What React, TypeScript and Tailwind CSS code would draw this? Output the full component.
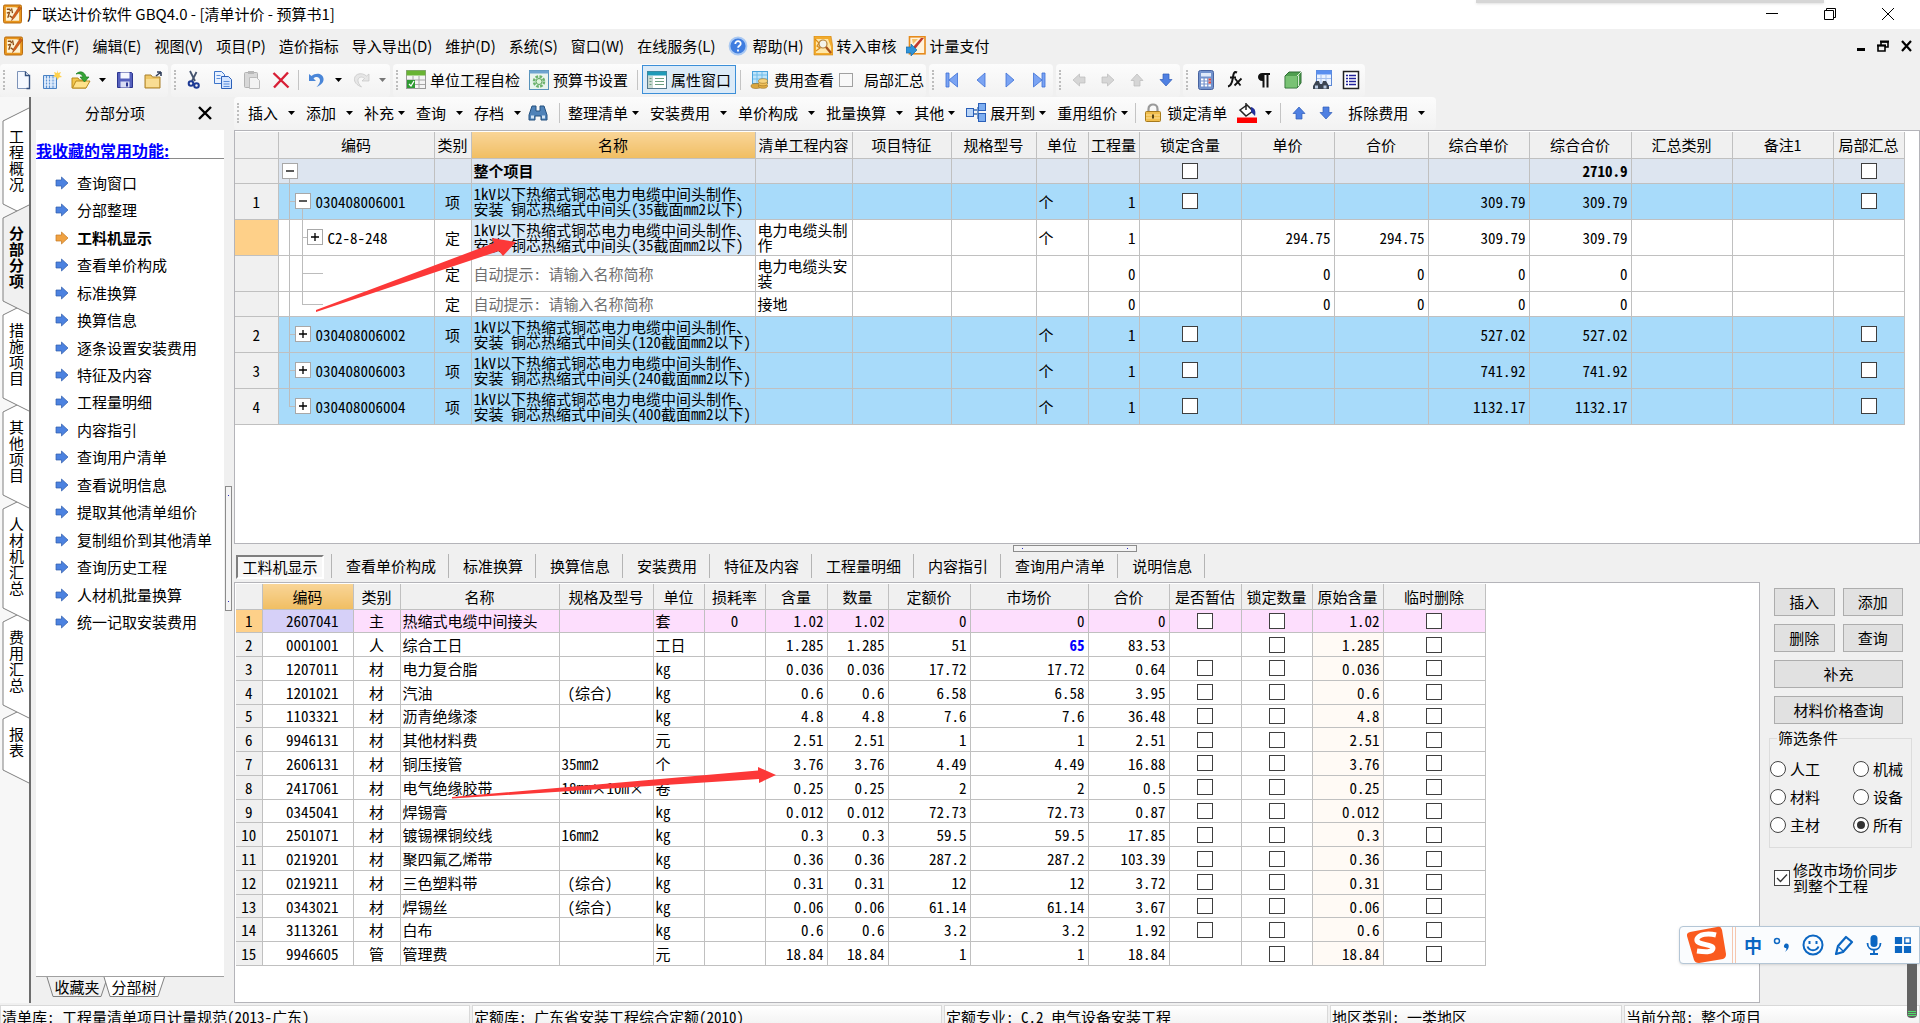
import React from 'react';
import clsx from 'clsx';

type IconProps = { children: React.ReactNode; box?: string; className?: string };

const Icon = ({ children, box = '0 0 20 20', className = 'w-5 h-5' }: IconProps) => (
  <svg viewBox={box} className={clsx('shrink-0', className)} fill="none" aria-hidden="true">
    {children}
  </svg>
);

const AppLogo = () => (
  <Icon className="w-[19px] h-5">
    <rect x="0.5" y="0.5" width="19" height="19" rx="1.5" fill="#e8951c" stroke="#b5680d" />
    <path d="M3 3h10l4 1v13H3z" fill="#fff3d2" />
    <path d="M4 5h3l1 2M4 9l3-1M5 14l2-6M9 4l1 5M7 12l3 2" stroke="#8a4a12" strokeWidth="1.4" />
    <path d="M17 2 10 13l-1 4 3-3 7-10z" fill="#d8601a" stroke="#8a3a0c" strokeWidth=".5" />
  </Icon>
);

const NewIcon = () => (
  <Icon>
    <path d="M4.500 1.500h8l4 4v13h-12z" fill="#f4f8ff" stroke="#7d93b8" />
    <path d="M12.500 1.500v4h4v13h-3" stroke="#35517f" strokeWidth="1.4" />
  </Icon>
);

const NewTableIcon = () => (
  <Icon>
    <path d="M1.500 5.500h13v13h-13z" fill="#cfe1f7" stroke="#4a82c4" />
    <path d="M4.500 6v12M7.500 6v12M11 6v12" stroke="#5b92d2" />
    <path d="M2 9h12M2 12h12M2 15h12" stroke="#eaf3ff" />
    <path d="m15 0 1 3 3-1-1.500 3L20 7l-3 .5L15.500 10 14 7l-3-.5 2-2L12 2l3 1z" fill="#ffd24d" />
  </Icon>
);

const OpenIcon = () => (
  <Icon>
    <path d="M1 8h6l1.500 2H15v8H1z" fill="#f3c64c" stroke="#b98a1d" />
    <path d="M1.500 18 5 11h14l-4 7z" fill="#ffe28a" stroke="#b98a1d" />
    <path d="M5 4c4-4 9-2 10 3h3l-4.500 5L9 7h3c-1-3-4-4-7-3z" fill="#35a535" stroke="#1c7a24" strokeWidth=".7" />
  </Icon>
);

const SaveIcon = () => (
  <Icon>
    <path d="M2.500 2.500h14l1 1v14h-15z" fill="#5560bd" stroke="#2c3690" />
    <rect x="5.500" y="2.500" width="9" height="6" fill="#f7f8ff" />
    <rect x="5.500" y="11.500" width="9" height="6" fill="#d9dcf3" />
    <rect x="11" y="12.500" width="2" height="4" fill="#2c3690" />
  </Icon>
);

const FolderUpIcon = () => (
  <Icon>
    <path d="M1 5h6l1.500 2H16v11H1z" fill="#efc766" stroke="#a9802c" />
    <path d="M2 9h13v8H2z" fill="#f9dd93" />
    <path d="m12 6 5-4m0 0h-4m4 0v4" stroke="#33405c" strokeWidth="1.6" />
  </Icon>
);

const CutIcon = () => (
  <Icon>
    <path d="m6 1 5 10M12.500 2 8 11" stroke="#44536e" strokeWidth="1.8" />
    <circle cx="7" cy="13.500" r="2.300" stroke="#1d3a94" strokeWidth="2" />
    <circle cx="12.500" cy="15.500" r="2.300" stroke="#1d3a94" strokeWidth="2" />
  </Icon>
);

const CopyIcon = () => (
  <Icon>
    <path d="M1.500 1.500h7l3 3v9h-10z" fill="#e8f1ff" stroke="#3d74c9" />
    <path d="M8.500 6.500h7l3 3v9h-10z" fill="#d3e4ff" stroke="#2a5fb8" />
    <path d="M3.500 5.500h4M3.500 8.500h4M10.500 11.500h6M10.500 14h6M10.500 16.500h6" stroke="#5b8ddb" />
  </Icon>
);

const PasteIcon = () => (
  <Icon>
    <rect x="2.500" y="2.500" width="13" height="15" rx="1" fill="#d8d8d8" stroke="#b3b3b3" />
    <rect x="6" y="1" width="6" height="3" fill="#b8b8b8" />
    <path d="M7.500 7.500h7l3 3v8h-10z" fill="#f3f3f3" stroke="#bcbcbc" />
  </Icon>
);

const DeleteIcon = () => (
  <Icon>
    <path d="m2.500 3 15 14.500M17 2.500 3 17.500" stroke="#d81f36" strokeWidth="2.400" />
  </Icon>
);

const UndoIcon = () => (
  <Icon>
    <path d="M2 4v7h7L6.500 8.500C9 6 13 7 13 10.500c0 2-1 4-3.500 6.500 5-2 7.500-5 7-8.500C16 3.500 9 2 4.500 6z" fill="#4a86d8" />
  </Icon>
);

const RedoIcon = () => (
  <Icon>
    <path d="M18 4v7h-7l2.500-2.500C11 6 7 7 7 10.500c0 2 1 4 3.500 6.500-5-2-7.500-5-7-8.500C4 3.500 11 2 15.500 6z" fill="#e6e6e6" stroke="#c4c4c4" strokeWidth=".7" />
  </Icon>
);

const CheckTableIcon = () => (
  <Icon>
    <rect x="0.500" y="0.500" width="19" height="18" fill="#f5f5f5" stroke="#9a9a9a" />
    <rect x="0.500" y="0.500" width="19" height="5" fill="#69b434" />
    <path d="M7 6v13M13 6v13M1 10h18M1 14.500h18" stroke="#a8a8a8" />
    <rect x="1" y="10" width="8" height="8" fill="#2f9b33" />
    <path d="m3 14 2 2 3-5" stroke="#fff" strokeWidth="1.300" />
  </Icon>
);

const SettingsBookIcon = () => (
  <Icon>
    <rect x="0.500" y="0.500" width="19" height="19" fill="#e9f4ee" stroke="#5792ba" />
    <rect x="0.500" y="0.500" width="19" height="3" fill="#6ea4d0" />
    <circle cx="10" cy="11.500" r="5" stroke="#6cb36c" strokeWidth="2.600" strokeDasharray="2.600 1.300" />
    <circle cx="10" cy="11.500" r="3" fill="#dff2da" stroke="#56a356" />
  </Icon>
);

const PropertyIcon = () => (
  <Icon>
    <rect x="0.500" y="1.500" width="19" height="17" fill="#fff" stroke="#54798c" />
    <rect x="0.500" y="1.500" width="19" height="4" fill="#1f9bb8" />
    <rect x="1" y="6" width="5" height="12" fill="#c9d8d2" />
    <path d="M2.500 8.500h2M2.500 11.500h2M2.500 14.500h2M8 8.500h9M8 11.500h9M8 14.500h9" stroke="#6c9e80" />
  </Icon>
);

const FeeIcon = () => (
  <Icon>
    <rect x="2.500" y="1.500" width="15" height="12" fill="#bfe4fa" stroke="#4ba3dc" />
    <path d="M3 5h14M3 9h14M7 2v11M12 2v11" stroke="#6fbdea" />
    <ellipse cx="6" cy="16" rx="5" ry="2.500" fill="#d9a63f" stroke="#9c7120" strokeWidth=".6" />
    <ellipse cx="13" cy="16" rx="4.500" ry="2.300" fill="#e0ad45" stroke="#9c7120" strokeWidth=".6" />
    <ellipse cx="13" cy="13.500" rx="4.500" ry="2.300" fill="#f1c25c" stroke="#9c7120" strokeWidth=".6" />
    <ellipse cx="13" cy="11" rx="4.500" ry="2.300" fill="#f7d47f" stroke="#9c7120" strokeWidth=".6" />
  </Icon>
);

const NavFirst = () => (
  <Icon>
    <path d="M4 3h3v14H4zM15.500 3v14L7 10z" fill="#7ba4f3" stroke="#3d70d6" strokeWidth=".8" />
  </Icon>
);
const NavPrev = () => (
  <Icon>
    <path d="M14 3v14l-8-7z" fill="#7ba4f3" stroke="#3d70d6" strokeWidth=".8" />
  </Icon>
);
const NavNext = () => (
  <Icon>
    <path d="M6 3v14l8-7z" fill="#7ba4f3" stroke="#3d70d6" strokeWidth=".8" />
  </Icon>
);
const NavLast = () => (
  <Icon>
    <path d="M16 3h-3v14h3zM4.500 3v14l8.500-7z" fill="#7ba4f3" stroke="#3d70d6" strokeWidth=".8" />
  </Icon>
);

const turns = { up: '', right: 'rotate-90', down: 'rotate-180', left: '-rotate-90' };

const BlockArrow = ({ dir, muted }: { dir: keyof typeof turns; muted?: boolean }) => (
  <Icon className={clsx('w-5 h-5', turns[dir])}>
    <path
      d="m10 4 6 6.500h-3V16H7v-5.500H4z"
      fill={muted ? '#d6d6d6' : '#4f80e2'}
      stroke={muted ? '#bababa' : '#2f5cb8'}
      strokeWidth=".7"
    />
  </Icon>
);

const CalculatorIcon = () => (
  <Icon>
    <rect x="2.500" y="0.500" width="15" height="19" rx="2" fill="#7292cd" stroke="#4763a0" />
    <rect x="5" y="3" width="10" height="3.500" fill="#dfeafa" />
    <path d="M5 9.500h10M5 12.500h10M5 15.500h10" stroke="#fff" strokeWidth="2" strokeDasharray="2.500 1.200" />
    <path d="M12.500 9.500H15M12.500 12.500H15" stroke="#e04a3d" strokeWidth="2" />
  </Icon>
);

const FunctionIcon = () => (
  <Icon>
    <path d="M12 2.500C9 1 8.500 4 8 7s-1 9-5 9.500M5 7.500h6" stroke="#111" strokeWidth="2" />
    <path d="m10 8.500 5.500 7M16.500 8.500 9.500 15.500" stroke="#111" strokeWidth="1.800" />
  </Icon>
);

const ParagraphIcon = () => (
  <Icon>
    <path d="M16 3H8.500C5.500 3 4 5 4 7s1.500 4 4.500 4v6.500h2V5h2v12.500h2V5H16z" fill="#111" />
  </Icon>
);

const BookIcon = () => (
  <Icon>
    <path d="M2 6 6 2h12v11l-4 5H2z" fill="#4f9f4f" stroke="#2f6d34" />
    <path d="M2.500 6H14v11.500H2.500z" fill="#79c274" />
    <path d="m14 6 4-4M15.500 5.500v10.500" stroke="#d8ecd4" />
  </Icon>
);

const SearchTableIcon = () => (
  <Icon>
    <rect x="4.500" y="0.500" width="15" height="15" fill="#eaf2ff" stroke="#5c88d6" />
    <rect x="4.500" y="0.500" width="15" height="4" fill="#5a8ff0" />
    <path d="M9 5v9M14 5v9M5 8.500h14" stroke="#a5c0ee" />
    <path d="M4 11h3l1 3h2l1-3h3l3 5v3H1v-3z" fill="#3b4452" />
    <rect x="3" y="15.500" width="3" height="3" fill="#bccbe3" />
    <rect x="11.500" y="15.500" width="3" height="3" fill="#bccbe3" />
  </Icon>
);

const ListIcon = () => (
  <Icon>
    <rect x="2.500" y="1.500" width="15" height="17" fill="#fff" stroke="#222" strokeWidth="1.500" />
    <path d="M5 5.500h2M5 8.500h2M5 11.500h2M5 14.500h2M8 5.500h7M8 8.500h7M8 11.500h7M8 14.500h7" stroke="#22229a" strokeWidth="1.500" />
  </Icon>
);

const BinocularsIcon = () => (
  <Icon>
    <path d="M4 3h4v5h4V3h4l3 9v5h-6v-4H7v4H1v-5z" fill="#4f82b8" stroke="#24517f" />
    <path d="M3 12.500h3v3H3zM14 12.500h3v3h-3z" fill="#d3e5f6" />
  </Icon>
);

const ExpandIcon = () => (
  <Icon>
    <path d="M6 7h5M6 11h5M12 4v12" stroke="#3b6fb5" strokeWidth="1.400" />
    <rect x="0.500" y="5.500" width="7" height="8" fill="#b8d4f7" stroke="#2a5fb8" />
    <rect x="12.500" y="0.500" width="7" height="7" fill="#7eaef0" stroke="#2a5fb8" />
    <rect x="12.500" y="10.500" width="7" height="8" fill="#7eaef0" stroke="#2a5fb8" />
  </Icon>
);

const LockIcon = () => (
  <Icon>
    <path d="M5.500 9V6c0-6 9-6 9 0v3" stroke="#9a9a9a" strokeWidth="2.200" />
    <rect x="2.500" y="8.500" width="15" height="10" rx="1" fill="#f0bd4b" stroke="#a77a1c" />
    <path d="M3 12h14M3 15h14" stroke="#ffe19a" />
    <rect x="9" y="11.500" width="2" height="4" fill="#5a4312" />
  </Icon>
);

const BucketIcon = () => (
  <Icon>
    <path d="m3 7 7-5 6 6-7 5z" fill="#fff" stroke="#222" strokeWidth="1.500" />
    <path d="M9 0v7" stroke="#222" strokeWidth="1.500" />
    <path d="M14 4c4 1 5 4 4 9l-4-4z" fill="#23319a" />
    <rect x="0" y="14.500" width="20" height="5.500" fill="#fe0000" />
  </Icon>
);

const HelpIcon = () => (
  <Icon>
    <circle cx="10" cy="10" r="8.500" fill="#3f7de0" stroke="#a9c8f2" strokeWidth="1.800" />
    <path d="M7.300 8c0-4 5.700-3.500 5.400 0-.2 1.800-2.600 1.800-2.600 3.800M10 13.500v2" stroke="#fff" strokeWidth="1.800" />
  </Icon>
);

const AuditIcon = () => (
  <Icon>
    <path d="M1 0h17l2 12v7H1z" fill="#f3ab2c" stroke="#cf8312" strokeWidth=".6" />
    <path d="M3 3h12l3 8v6H3z" fill="#ffe7a8" />
    <path d="m2 3 4 4-2 3 3 2-4 3" stroke="#d98a1a" strokeWidth="1.200" />
    <circle cx="10" cy="8" r="4" fill="#f3f3ec" stroke="#b5813a" strokeWidth="1.200" />
    <path d="m13 11 5 6" stroke="#a8521e" strokeWidth="2.400" />
  </Icon>
);

const PayIcon = () => (
  <Icon>
    <rect x="3.500" y="0.800" width="15.500" height="17" fill="#fff3dc" stroke="#e68a1b" strokeWidth="1.600" />
    <path d="M6 3h6l-5 5z" fill="#f6c26a" />
    <path d="M18 2 10 12l-3 1 1-3 7-8z" fill="#c2392b" />
    <path d="M0 11h5V8l6 6-6 6v-3H0z" fill="#2f93d8" stroke="#1a6aa6" strokeWidth=".7" />
  </Icon>
);

const ItemArrow = ({ active }: { active?: boolean }) => (
  <Icon box="0 0 14 14" className="w-[14px] h-[14px]">
    <path
      d="M1 4h5.500V1l6.500 6-6.500 6v-3H1z"
      fill={active ? '#f0a242' : '#4c82e0'}
      stroke={active ? '#c47a22' : '#2f5cab'}
      strokeWidth=".7"
    />
  </Icon>
);

const Caret = ({ muted }: { muted?: boolean }) => (
  <Icon box="0 0 7 4" className="w-[7px] h-1">
    <path d="M0 0h7L3.500 4z" fill={muted ? '#777' : '#000'} />
  </Icon>
);

const Grip = () => (
  <div className="w-2 h-5 shrink-0 flex justify-center">
    <div className="border-l-2 border-dotted border-[#bdbdbd]" />
  </div>
);

const Divider = ({ className = 'mx-[3px]' }: { className?: string }) => (
  <div className={clsx('w-px h-5 shrink-0 bg-[#c4c4c4]', className)} />
);

const Segment = ({ children }: { children: React.ReactNode }) => (
  <div className="flex items-center h-[33px] pb-[2px] mr-[3px] shrink-0 rounded-sm bg-linear-to-b from-[#fcfcfc] to-[#f2f2f2]">
    <Grip />
    {children}
  </div>
);

const IconButton = ({ label, children }: { label: string; children: React.ReactNode }) => (
  <button aria-label={label} className="w-[29px] h-7 flex items-center justify-center">
    {children}
  </button>
);

const CaretButton = ({ label, muted }: { label: string; muted?: boolean }) => (
  <button aria-label={label} className="w-[15px] h-7 flex items-center justify-center">
    <Caret muted={muted} />
  </button>
);

const TextButton = ({ icon, children }: { icon: React.ReactNode; children: React.ReactNode }) => (
  <button className="flex items-center gap-1 pl-[5px] pr-1 h-7 whitespace-nowrap">
    {icon}
    <span>{children}</span>
  </button>
);

// Drop-down entry on the second toolbar; `tight` pulls the caret next to the text.
const MenuButton = ({ tight, children }: { tight?: boolean; children: React.ReactNode }) => (
  <button className={clsx('flex items-center h-7 pr-[11px] whitespace-nowrap', tight ? 'gap-1' : 'gap-[10px]')}>
    <span className="flex items-center gap-1">{children}</span>
    <Caret />
  </button>
);

const TitleBar = () => (
  <header className="h-[29px] shrink-0 bg-white flex items-center pb-[2px] pl-[3px] pr-[26px] relative">
    <AppLogo />
    <h1 className="ml-[5px] flex-1">广联达计价软件 GBQ4.0 - [清单计价 - 预算书1]</h1>
    <div className="absolute top-0 right-24 w-[348px] h-[3px] bg-[#d6d6d6] shadow" />
    <div className="flex items-center gap-[46px]">
      <button aria-label="最小化">
        <Icon box="0 0 12 12" className="w-3 h-3">
          <path d="M0 5.500h12" stroke="#000" />
        </Icon>
      </button>
      <button aria-label="还原">
        <Icon box="0 0 12 12" className="w-3 h-3">
          <path d="M.5 2.500h9v9h-9zM2.500 2V.5h9v9H10" stroke="#000" />
        </Icon>
      </button>
      <button aria-label="关闭">
        <Icon box="0 0 12 12" className="w-3 h-3">
          <path d="m0 0 12 12M12 0 0 12" stroke="#000" />
        </Icon>
      </button>
    </div>
  </header>
);

const menus = ['文件(F)', '编辑(E)', '视图(V)', '项目(P)', '造价指标', '导入导出(D)', '维护(D)', '系统(S)', '窗口(W)', '在线服务(L)'];

const MenuBar = () => (
  <nav className="h-[35px] shrink-0 flex items-center pb-[2px] pl-1 pr-[7px]">
    <AppLogo />
    <div className="ml-2 flex items-center gap-[13px] flex-1 whitespace-nowrap">
      {menus.map((m) => (
        <button key={m}>{m}</button>
      ))}
      <button className="flex items-center gap-1">
        <HelpIcon />
        帮助(H)
      </button>
      <button className="flex items-center gap-1 -ml-1">
        <AuditIcon />
        转入审核
      </button>
      <button className="flex items-center gap-1 -ml-1">
        <PayIcon />
        计量支付
      </button>
    </div>
    <div className="flex items-center gap-3">
      <button aria-label="最小化子窗口">
        <Icon box="0 0 8 12" className="w-2 h-3">
          <path d="M0 9.500h8" stroke="#000" strokeWidth="3" />
        </Icon>
      </button>
      <button aria-label="还原子窗口">
        <Icon box="0 0 12 12" className="w-3 h-3">
          <path d="M1 5.500h7v5.500H1zM4 5V2h7v5H8" stroke="#000" strokeWidth="1.600" />
          <path d="M3 1.500h9M0 5.500h9" stroke="#000" strokeWidth="2" />
        </Icon>
      </button>
      <button aria-label="关闭子窗口">
        <Icon box="0 0 12 12" className="w-3 h-3">
          <path d="m1 1 9 10M10 1 1 11" stroke="#000" strokeWidth="2.200" />
        </Icon>
      </button>
    </div>
  </nav>
);

const MainToolbar = () => (
  <div className="h-[33px] shrink-0 flex items-center overflow-hidden">
    <Segment>
      <IconButton label="新建"><NewIcon /></IconButton>
      <IconButton label="新建清单"><NewTableIcon /></IconButton>
      <IconButton label="打开"><OpenIcon /></IconButton>
      <CaretButton label="最近文件" />
      <IconButton label="保存"><SaveIcon /></IconButton>
      <IconButton label="关闭文件"><FolderUpIcon /></IconButton>
    </Segment>
    <Segment>
      <IconButton label="剪切"><CutIcon /></IconButton>
      <IconButton label="复制"><CopyIcon /></IconButton>
      <IconButton label="粘贴"><PasteIcon /></IconButton>
      <IconButton label="删除行"><DeleteIcon /></IconButton>
      <Divider />
      <IconButton label="撤销"><UndoIcon /></IconButton>
      <CaretButton label="撤销列表" />
      <IconButton label="重做"><RedoIcon /></IconButton>
      <CaretButton label="重做列表" muted />
    </Segment>
    <Segment>
      <TextButton icon={<CheckTableIcon />}>单位工程自检</TextButton>
      <TextButton icon={<SettingsBookIcon />}>预算书设置</TextButton>
      <Divider className="ml-[5px] mr-1" />
      <button className="flex items-center gap-1 px-1 h-[29px] border border-[#3c8fd8] bg-[#dcebf8] whitespace-nowrap">
        <PropertyIcon />
        属性窗口
      </button>
      <Divider className="mx-1" />
      <TextButton icon={<FeeIcon />}>费用查看</TextButton>
      <label className="flex items-center gap-[11px] ml-px mr-[2px] whitespace-nowrap">
        <input type="checkbox" className="appearance-none w-[14px] h-[14px] border border-[#a0a0a0] bg-[#f8f8f8]" />
        局部汇总
      </label>
    </Segment>
    <Segment>
      <IconButton label="第一条"><NavFirst /></IconButton>
      <IconButton label="上一条"><NavPrev /></IconButton>
      <IconButton label="下一条"><NavNext /></IconButton>
      <IconButton label="最后一条"><NavLast /></IconButton>
    </Segment>
    <Segment>
      <IconButton label="升级"><BlockArrow dir="left" muted /></IconButton>
      <IconButton label="降级"><BlockArrow dir="right" muted /></IconButton>
      <IconButton label="上移"><BlockArrow dir="up" muted /></IconButton>
      <IconButton label="下移"><BlockArrow dir="down" /></IconButton>
    </Segment>
    <Segment>
      <IconButton label="计算器"><CalculatorIcon /></IconButton>
      <IconButton label="函数"><FunctionIcon /></IconButton>
      <IconButton label="特殊符号"><ParagraphIcon /></IconButton>
      <IconButton label="图元公式"><BookIcon /></IconButton>
      <IconButton label="查找"><SearchTableIcon /></IconButton>
      <IconButton label="列表"><ListIcon /></IconButton>
    </Segment>
  </div>
);

const ListToolbar = () => (
  <div className="h-[33px] shrink-0 flex items-center overflow-hidden">
    <Segment>
      <div className="flex items-center pl-[6px]">
        <MenuButton>插入</MenuButton>
        <MenuButton>添加</MenuButton>
        <MenuButton tight>补充</MenuButton>
        <MenuButton>查询</MenuButton>
        <MenuButton>存档</MenuButton>
        <button aria-label="查找清单" className="-ml-1"><BinocularsIcon /></button>
        <Divider className="ml-[11px] mr-2" />
        <MenuButton tight>整理清单</MenuButton>
        <MenuButton>安装费用</MenuButton>
        <MenuButton>单价构成</MenuButton>
        <MenuButton>批量换算</MenuButton>
        <MenuButton tight>其他</MenuButton>
        <MenuButton tight>
          <ExpandIcon />
          展开到
        </MenuButton>
        <MenuButton tight>重用组价</MenuButton>
        <Divider className="-ml-1 mr-[2px]" />
        <TextButton icon={<LockIcon />}>锁定清单</TextButton>
        <button aria-label="背景色" className="flex items-center gap-2 ml-[6px]">
          <BucketIcon />
          <Caret />
        </button>
        <Divider className="ml-2 mr-2" />
        <button aria-label="上移清单" className="mr-[7px]"><BlockArrow dir="up" /></button>
        <button aria-label="下移清单" className="mr-3"><BlockArrow dir="down" /></button>
        <MenuButton>拆除费用</MenuButton>
      </div>
    </Segment>
  </div>
);

const pageTabs = ['工程概况', '分部分项', '措施项目', '其他项目', '人材机汇总', '费用汇总', '报表'];

const PageTabs = () => (
  <nav className="w-[31px] shrink-0 flex flex-col pt-6 border-r-2 border-[#6d6d6d] bg-[#f7f7f7]">
    {pageTabs.map((tab, i) => {
      const active = i === 1;
      const h = tab.length * 16 + 33;
      return (
        <button
          key={tab}
          className={clsx('relative w-[29px] shrink-0', active && 'font-bold')}
          style={{ height: h, zIndex: active ? 20 : 10 - i }}
        >
          <svg viewBox={`0 0 29 ${h}`} className="absolute inset-0 w-full h-full overflow-visible" aria-hidden="true">
            <path
              d={`M29 -13 L3 0 V${h - 14} L29 ${h - 1}`}
              fill={active ? '#f0f0f0' : '#fff'}
              stroke="#808080"
            />
          </svg>
          <span className="absolute left-[9px] top-[7px] w-[15px] leading-4 break-all">{tab}</span>
        </button>
      );
    })}
  </nav>
);

const shortcuts = [
  '查询窗口', '分部整理', '工料机显示', '查看单价构成', '标准换算', '换算信息', '逐条设置安装费用', '特征及内容', '工程量明细',
  '内容指引', '查询用户清单', '查看说明信息', '提取其他清单组价', '复制组价到其他清单', '查询历史工程', '人材机批量换算', '统一记取安装费用',
];

const Sidebar = () => (
  <aside className="w-[193px] pl-[5px] shrink-0 flex flex-col">
    <div className="h-[33px] shrink-0 flex items-center pb-[2px]">
      <span className="ml-[49px] w-[60px]">分部分项</span>
      <button aria-label="关闭面板" className="ml-[53px]">
        <Icon box="0 0 14 14" className="w-[14px] h-[14px]">
          <path d="m1 1 12 12M13 1 1 13" stroke="#000" strokeWidth="2.400" />
        </Icon>
      </button>
    </div>
    <div className="flex-1 min-h-0 bg-white border-b border-[#a0a0a0]">
      <div className="h-[29px] border-b border-[#8a8a8a] flex items-end">
        <a href="#favorites" className="text-base font-bold leading-4 text-[#0000ff] underline whitespace-nowrap">我收藏的常用功能:</a>
      </div>
      <ul className="mt-[10px] h-[467px] grid auto-rows-fr">
        {shortcuts.map((s) => (
          <li key={s} className="flex items-center gap-2 pl-[19px]">
            <ItemArrow active={s === '工料机显示'} />
            <a href="#panel" className={clsx('whitespace-nowrap', s === '工料机显示' && 'font-bold')}>{s}</a>
          </li>
        ))}
      </ul>
    </div>
    <div className="h-[26px] shrink-0 pl-[10px] flex">
      {['收藏夹', '分部树'].map((t, i) => (
        <button key={t} className={clsx('relative w-[62px] h-5 leading-5 shrink-0', i > 0 && '-ml-[5px]')}>
          <svg viewBox="0 0 62 20" className="absolute inset-0 w-full h-full" aria-hidden="true">
            <path d="M1 0 7 19.500H55L61.500 0" fill={i === 0 ? '#f0f0f0' : '#fff'} stroke="#808080" />
          </svg>
          <span className="relative">{t}</span>
        </button>
      ))}
    </div>
  </aside>
);

const VerticalSplitter = () => (
  <div className="w-[10px] shrink-0 pt-[389px] pl-px">
    <div className="w-[7px] h-[125px] border border-[#8c8c8c] bg-[#f4f4f4] flex flex-col items-center justify-between py-2">
      <i className="w-px h-px bg-[#3030c0]" />
      <i className="w-px h-px bg-[#3030c0]" />
    </div>
  </div>
);

const CellCheck = ({ label }: { label: string }) => (
  <input type="checkbox" aria-label={label} className="appearance-none block mx-auto w-4 h-4 border border-[#3f3f3f] bg-white" />
);

const listCols: [string, string][] = [
  ['', 'w-[43px]'], ['编码', 'w-[156px]'], ['类别', 'w-[37px]'], ['名称', 'w-[284px]'], ['清单工程内容', 'w-[97px]'],
  ['项目特征', 'w-[99px]'], ['规格型号', 'w-[85px]'], ['单位', 'w-[52px]'], ['工程量', 'w-[51px]'], ['锁定含量', 'w-[102px]'],
  ['单价', 'w-[93px]'], ['合价', 'w-[94px]'], ['综合单价', 'w-[101px]'], ['综合合价', 'w-[102px]'], ['汇总类别', 'w-[101px]'],
  ['备注1', 'w-[101px]'], ['局部汇总', 'w-[71px]'],
];

type ListRow = {
  no: string;
  kind: 'root' | 'item' | 'quota' | 'hint';
  code?: string;
  open?: boolean;
  name: string;
  work?: string;
  qty?: string;
  price?: string;
  total?: string;
  tall?: boolean;
};

const cable = (size: string) => `1kV以下热缩式铜芯电力电缆中间头制作、\n安装 铜芯热缩式中间头(${size}截面mm2以下)`;

const listRows: ListRow[] = [
  { no: '', kind: 'root', open: true, name: '整个项目', total: '2710.9' },
  { no: '1', kind: 'item', code: '030408006001', open: true, name: cable('35'), qty: '1', total: '309.79', tall: true },
  { no: '', kind: 'quota', code: 'C2-8-248', name: cable('35'), work: '电力电缆头制作', qty: '1', price: '294.75', total: '309.79', tall: true },
  { no: '', kind: 'hint', name: '自动提示: 请输入名称简称', work: '电力电缆头安装', qty: '0', price: '0', total: '0', tall: true },
  { no: '', kind: 'hint', name: '自动提示: 请输入名称简称', work: '接地', qty: '0', price: '0', total: '0' },
  { no: '2', kind: 'item', code: '030408006002', name: cable('120'), qty: '1', total: '527.02', tall: true },
  { no: '3', kind: 'item', code: '030408006003', name: cable('240'), qty: '1', total: '741.92', tall: true },
  { no: '4', kind: 'item', code: '030408006004', name: cable('400'), qty: '1', total: '1132.17', tall: true },
];

const Toggle = ({ open }: { open?: boolean }) => (
  <button aria-label={open ? '折叠' : '展开'} className="relative w-4 h-4 shrink-0 border border-[#a8a8a8] bg-white">
    <Icon box="0 0 14 14" className="w-[14px] h-[14px]">
      <path d={open ? 'M3 7h8' : 'M3 7h8M7 3v8'} stroke="#000" strokeWidth="1.300" />
    </Icon>
  </button>
);

// Connector lines of the code tree, one drawing per row.
const treeLines = [
  'M10.500 12V24',
  'M10.500 0V36M10 17.500H17M23.500 18V36',
  'M10.500 0V36M23.500 0V36M23 17.500H30',
  'M10.500 0V36M23.500 0V36M23 17.500H44',
  'M10.500 0V25M23.500 0V12M23 12.500H44',
  'M10.500 0V36M10 17.500H17',
  'M10.500 0V36M10 17.500H17',
  'M10.500 0V18M10 17.500H17',
];

const indent = { root: 'pl-[3px]', item: 'pl-4', quota: 'pl-7', hint: 'pl-7' };

const BillTable = () => (
  <table className="table-fixed border-collapse w-[1669px] leading-[15px] [font-feature-settings:'hwid']">
    <colgroup>
      {listCols.map(([label, w]) => (
        <col key={label} className={w} />
      ))}
    </colgroup>
    <thead>
      <tr className="h-[26px] bg-[#f0f0f0]">
        {listCols.map(([label]) => (
          <th
            key={label}
            className={clsx(
              'p-0 font-normal whitespace-nowrap border-r border-b border-[#c0c0c0]',
              label === '名称' && 'bg-linear-to-b from-[#f9d597] to-[#f0be62]',
            )}
          >
            {label}
          </th>
        ))}
      </tr>
    </thead>
    <tbody>
      {listRows.map((r, i) => {
        const checks = r.kind === 'root' || r.kind === 'item';
        const cell = 'p-0 border-r border-b border-[#c0c0c0]';
        const num = clsx(cell, 'text-right pr-[3px]');
        return (
          <tr
            key={i}
            className={clsx(
              r.kind === 'root' && 'bg-[#dde5f0] font-bold',
              r.kind === 'item' && 'bg-[#a8dbfa]',
            )}
          >
            <td className={clsx(cell, 'text-center', r.kind === 'quota' ? 'bg-[#fed089]' : 'bg-[#f0f0f0]')}>{r.no}</td>
            <td className={cell}>
              <div className={clsx('relative flex items-center gap-[5px]', r.tall ? 'h-[35px]' : 'h-6', indent[r.kind])}>
                <svg className="absolute inset-0 w-full h-full" aria-hidden="true">
                  <path d={treeLines[i]} fill="none" stroke="#bcbcbc" />
                </svg>
                {r.kind !== 'hint' && <Toggle open={r.open} />}
                <span className="relative">{r.code}</span>
              </div>
            </td>
            <td className={clsx(cell, 'text-center')}>{r.kind === 'root' ? '' : r.kind === 'item' ? '项' : '定'}</td>
            <td
              className={clsx(
                cell,
                'pl-[2px] whitespace-pre',
                r.kind === 'quota' && 'bg-[#d8e9f8]',
                r.kind === 'hint' && 'text-[#6f6f6f]',
              )}
            >
              {r.name}
            </td>
            <td className={clsx(cell, 'pl-[2px]')}>{r.work}</td>
            <td className={cell} />
            <td className={cell} />
            <td className={clsx(cell, 'pl-[2px]')}>{r.kind === 'item' || r.kind === 'quota' ? '个' : ''}</td>
            <td className={num}>{r.qty}</td>
            <td className={cell}>{checks && <CellCheck label="锁定含量" />}</td>
            <td className={num}>{r.price}</td>
            <td className={num}>{r.price}</td>
            <td className={num}>{r.kind === 'root' ? '' : r.total}</td>
            <td className={num}>{r.total}</td>
            <td className={cell} />
            <td className={cell} />
            <td className={cell}>{checks && <CellCheck label="局部汇总" />}</td>
          </tr>
        );
      })}
    </tbody>
  </table>
);

const detailTabs = ['查看单价构成', '标准换算', '换算信息', '安装费用', '特征及内容', '工程量明细', '内容指引', '查询用户清单', '说明信息'];

const DetailTabs = () => (
  <div className="h-[29px] shrink-0 flex items-start pl-[2px] pt-px">
    <button className="h-6 mt-px mr-[7px] w-[88px] border-2 border-t-[#7f7f7f] border-l-[#7f7f7f] border-r-white border-b-white bg-[#f7f7f7] leading-5 whitespace-nowrap">
      工料机显示
    </button>
    <div className="flex h-6 border-l border-[#b4b4b4]">
      {detailTabs.map((t) => (
        <button key={t} className="pl-[14px] pr-3 leading-6 border-r border-[#b4b4b4] whitespace-nowrap">
          {t}
        </button>
      ))}
    </div>
  </div>
);

const resourceCols: [string, string][] = [
  ['', 'w-[26px]'], ['编码', 'w-[91px]'], ['类别', 'w-[47px]'], ['名称', 'w-[159px]'], ['规格及型号', 'w-[94px]'], ['单位', 'w-[51px]'],
  ['损耗率', 'w-[61px]'], ['含量', 'w-[62px]'], ['数量', 'w-[61px]'], ['定额价', 'w-[82px]'], ['市场价', 'w-[118px]'], ['合价', 'w-[81px]'],
  ['是否暂估', 'w-[72px]'], ['锁定数量', 'w-[71px]'], ['原始含量', 'w-[71px]'], ['临时删除', 'w-[102px]'],
];

// code, kind, name, spec, unit, amount, base price, market price, total
const resources = [
  ['2607041', '主', '热缩式电缆中间接头', '', '套', '1.02', '0', '0', '0'],
  ['0001001', '人', '综合工日', '', '工日', '1.285', '51', '65', '83.53'],
  ['1207011', '材', '电力复合脂', '', 'kg', '0.036', '17.72', '17.72', '0.64'],
  ['1201021', '材', '汽油', '(综合)', 'kg', '0.6', '6.58', '6.58', '3.95'],
  ['1103321', '材', '沥青绝缘漆', '', 'kg', '4.8', '7.6', '7.6', '36.48'],
  ['9946131', '材', '其他材料费', '', '元', '2.51', '1', '1', '2.51'],
  ['2606131', '材', '铜压接管', '35mm2', '个', '3.76', '4.49', '4.49', '16.88'],
  ['2417061', '材', '电气绝缘胶带', '18mm×10m×', '卷', '0.25', '2', '2', '0.5'],
  ['0345041', '材', '焊锡膏', '', 'kg', '0.012', '72.73', '72.73', '0.87'],
  ['2501071', '材', '镀锡裸铜绞线', '16mm2', 'kg', '0.3', '59.5', '59.5', '17.85'],
  ['0219201', '材', '聚四氟乙烯带', '', 'kg', '0.36', '287.2', '287.2', '103.39'],
  ['0219211', '材', '三色塑料带', '(综合)', 'kg', '0.31', '12', '12', '3.72'],
  ['0343021', '材', '焊锡丝', '(综合)', 'kg', '0.06', '61.14', '61.14', '3.67'],
  ['3113261', '材', '白布', '', 'kg', '0.6', '3.2', '3.2', '1.92'],
  ['9946605', '管', '管理费', '', '元', '18.84', '1', '1', '18.84'],
];

const ResourceTable = () => (
  <table className="table-fixed border-collapse w-[1249px] h-[382px] leading-[15px] [font-feature-settings:'hwid']">
    <colgroup>
      {resourceCols.map(([label, w]) => (
        <col key={label} className={w} />
      ))}
    </colgroup>
    <thead>
      <tr className="h-[25px] bg-[#f0f0f0]">
        {resourceCols.map(([label]) => (
          <th
            key={label}
            className={clsx(
              'p-0 font-normal whitespace-nowrap border-r border-b border-[#c0c0c0]',
              label === '编码' && 'bg-linear-to-b from-[#f9d597] to-[#f0be62]',
            )}
          >
            {label}
          </th>
        ))}
      </tr>
    </thead>
    <tbody>
      {resources.map(([code, kind, name, spec, unit, amount, base, market, total], i) => {
        const first = i === 0;
        const cell = 'p-0 border-r border-b border-[#c0c0c0] whitespace-nowrap';
        const num = clsx(cell, 'text-right pr-[3px]');
        return (
          <tr key={code} className={clsx(first && 'bg-[#fddefd]')}>
            <td className={clsx(cell, 'text-center', first ? 'bg-[#fed089]' : 'bg-[#f0f0f0]')}>{i + 1}</td>
            <td className={clsx(cell, 'text-right pr-[14px]', first && 'bg-[#d6d0f8]')}>{code}</td>
            <td className={clsx(cell, 'text-center')}>{kind}</td>
            <td className={clsx(cell, 'pl-[2px]')}>{name}</td>
            <td className={clsx(cell, spec.startsWith('(') ? 'pl-2' : 'pl-[2px]')}>{spec}</td>
            <td className={clsx(cell, 'pl-[2px]')}>{unit}</td>
            <td className={clsx(cell, 'text-center')}>{first ? '0' : ''}</td>
            <td className={num}>{amount}</td>
            <td className={num}>{amount}</td>
            <td className={num}>{base}</td>
            <td className={clsx(num, base !== market && 'font-bold text-[#0000ff]')}>{market}</td>
            <td className={num}>{total}</td>
            <td className={cell}>{kind !== '人' && kind !== '管' && <CellCheck label="是否暂估" />}</td>
            <td className={cell}><CellCheck label="锁定数量" /></td>
            <td className={clsx(num, !first && 'bg-[#fffaf5]')}>{amount}</td>
            <td className={cell}><CellCheck label="临时删除" /></td>
          </tr>
        );
      })}
    </tbody>
  </table>
);

const ActionButton = ({ wide, children }: { wide?: boolean; children: React.ReactNode }) => (
  <button className={clsx('h-7 border border-[#adadad] bg-[#e1e1e1] leading-[26px]', wide && 'col-span-2')}>{children}</button>
);

const ActionPanel = () => (
  <aside className="w-[160px] shrink-0 pt-[6px] pl-[9px] pr-2">
    <div className="grid grid-cols-2 gap-x-2 gap-y-2 pl-[5px] pr-[9px]">
      <ActionButton>插入</ActionButton>
      <ActionButton>添加</ActionButton>
      <ActionButton>删除</ActionButton>
      <ActionButton>查询</ActionButton>
      <ActionButton wide>补充</ActionButton>
      <ActionButton wide>材料价格查询</ActionButton>
    </div>
    <fieldset className="mt-1 h-[120px] border border-[#dcdcdc]">
      <legend className="ml-[7px] px-px leading-5">筛选条件</legend>
      <div className="grid grid-cols-[83px_1fr] pt-[7px]">
        {['人工', '机械', '材料', '设备', '主材', '所有'].map((f) => (
          <label key={f} className="flex items-center gap-1 h-7 whitespace-nowrap">
            <input
              type="radio"
              name="filter"
              defaultChecked={f === '所有'}
              className="appearance-none w-4 h-4 rounded-full border border-[#444] bg-white checked:bg-[#333] checked:shadow-[inset_0_0_0_3px_#fff]"
            />
            {f}
          </label>
        ))}
      </div>
    </fieldset>
    <label className="mt-[14px] pl-[5px] flex items-center gap-[3px] leading-4 whitespace-nowrap">
      <span className="relative w-4 h-4">
        <input type="checkbox" defaultChecked className="appearance-none block w-4 h-4 border border-[#444] bg-white" />
        <Icon box="0 0 16 16" className="absolute inset-0 w-4 h-4">
          <path d="m3 8 3.500 3.500L13 4.500" stroke="#333" strokeWidth="1.300" />
        </Icon>
      </span>
      <span>
        修改市场价同步
        <br />
        到整个工程
      </span>
    </label>
  </aside>
);

const StatusBar = () => (
  <footer className="h-[18px] shrink-0 overflow-hidden grid grid-cols-[470px_470px_384px_292px_1fr] gap-x-[2px] [font-feature-settings:'hwid']">
    {['清单库: 工程量清单项目计量规范(2013-广东)', '定额库: 广东省安装工程综合定额(2010)', '定额专业: C.2 电气设备安装工程', '地区类别: 一类地区', '当前分部: 整个项目'].map((s) => (
      <div key={s} className="h-6 pl-px leading-[22px] border border-[#d9d9d9] bg-linear-to-b from-white to-[#f0f0f0] whitespace-nowrap">
        {s}
      </div>
    ))}
  </footer>
);

const Annotations = () => (
  <>
    <svg viewBox="0 0 200 76" className="absolute left-[316px] top-[236px] w-[200px] h-[76px] pointer-events-none z-30" aria-hidden="true">
      <path d="M0 74 178 7 176 2 200 6 187 20 183 15 0 76z" fill="#fc3838" />
    </svg>
    <svg viewBox="0 0 326 34" className="absolute left-[452px] top-[766px] w-[326px] h-[34px] pointer-events-none z-30" aria-hidden="true">
      <path d="M0 31 306 4.500V1l18 8-17 8v-4L0 32.500z" fill="#fc3838" />
    </svg>
  </>
);

const InputMethodBar = () => (
  <div className="absolute right-0 top-[926px] w-[241px] h-[38px] rounded-l border border-[#b4c6d6] bg-[#fafcfe] shadow flex items-center z-30">
    <Icon box="0 0 40 38" className="w-10 h-[38px] ml-[6px]">
      <path d="M4 6 31 1c3-1 4 0 5 3l4 24c0 3-1 4-3 5l-24 4c-3 0-4-1-5-3L1 10c0-2 0-3 3-4z" fill="#fa5a1e" />
      <path d="M30 9C22 7 13 8 11 13c-2 6 16 5 16 9 0 5-9 4-16 3" stroke="#fff" strokeWidth="5" />
    </Icon>
    <div className="w-1 h-9 ml-[6px] border-x border-[#f6c6ae]" />
    <div className="flex-1 flex items-center justify-between pl-2 pr-[7px] text-[#0b66c2]">
      <button className="text-lg font-bold leading-5">中</button>
      <button aria-label="标点">
        <Icon>
          <circle cx="5" cy="6" r="2.500" stroke="#0b66c2" strokeWidth="1.500" />
          <path d="M13 9c4-2 6 4 0 8 1-2 2-3 1-4-2 0-3-2-1-4z" fill="#0b66c2" />
        </Icon>
      </button>
      <button aria-label="表情">
        <Icon box="0 0 22 22" className="w-[22px] h-[22px]">
          <circle cx="11" cy="11" r="9.500" stroke="#0b66c2" strokeWidth="2" />
          <path d="M7.500 7v3M14.500 7v3M5.500 12.500c2 5 9 5 11 0" stroke="#0b66c2" strokeWidth="2" />
        </Icon>
      </button>
      <button aria-label="手写">
        <Icon>
          <path d="m12 2 6 5-9 10-7 2 2-8z" stroke="#0b66c2" strokeWidth="2.200" strokeLinejoin="round" />
          <path d="m5 12 4 4" stroke="#0b66c2" strokeWidth="1.500" />
        </Icon>
      </button>
      <button aria-label="语音">
        <Icon>
          <rect x="6.500" y="0" width="7" height="12" rx="3.500" fill="#0b66c2" />
          <path d="M3.500 8c0 9 13 9 13 0M10 14v5M6 19h8" stroke="#0b66c2" strokeWidth="1.800" />
        </Icon>
      </button>
      <button aria-label="工具箱">
        <Icon className="w-[18px] h-[18px]">
          <path d="M1 1h8v8H1zM1 11h8v8H1zM11 11h8v8h-8z" fill="#0b66c2" />
          <path d="M12 2h6v6h-6z" stroke="#0b66c2" strokeWidth="1.500" />
        </Icon>
      </button>
    </div>
  </div>
);

const LevelMeter = () => (
  <div className="absolute right-[3px] top-[964px] w-[10px] h-[54px] bg-[#626262] rounded-b flex flex-col justify-end items-center gap-px pb-[2px] z-30">
    <i className="w-2 h-px bg-[#4fe06a]" />
    <i className="w-2 h-px bg-[#4fe06a]" />
    <i className="w-2 h-px bg-[#4fe06a]" />
  </div>
);

export default function App() {
  return (
    <div className="relative h-screen overflow-hidden flex flex-col bg-[#f0f0f0] text-black text-[15px] leading-5 font-['Noto_Sans_CJK_SC',sans-serif]">
      <TitleBar />
      <MenuBar />
      <MainToolbar />
      <div className="flex-1 min-h-0 flex pb-[2px]">
        <PageTabs />
        <Sidebar />
        <VerticalSplitter />
        <main className="flex-1 min-w-0 flex flex-col">
          <ListToolbar />
          <section className="h-[414px] shrink-0 border border-[#b4b4b9] pt-px bg-white overflow-hidden">
            <BillTable />
          </section>
          <div className="h-[9px] shrink-0 flex justify-center items-center pr-1">
            <div className="w-[124px] h-[7px] border border-[#8c8c8c] bg-[#f4f4f4] flex items-center justify-between px-2">
              <i className="w-px h-px bg-[#3030c0]" />
              <i className="w-px h-px bg-[#3030c0]" />
            </div>
          </div>
          <DetailTabs />
          <div className="flex-1 min-h-0 flex">
            <section className="flex-1 min-w-0 border border-[#b4b4b9] pt-px pl-px bg-white overflow-hidden">
              <ResourceTable />
            </section>
            <ActionPanel />
          </div>
        </main>
      </div>
      <StatusBar />
      <Annotations />
      <InputMethodBar />
      <LevelMeter />
    </div>
  );
}
